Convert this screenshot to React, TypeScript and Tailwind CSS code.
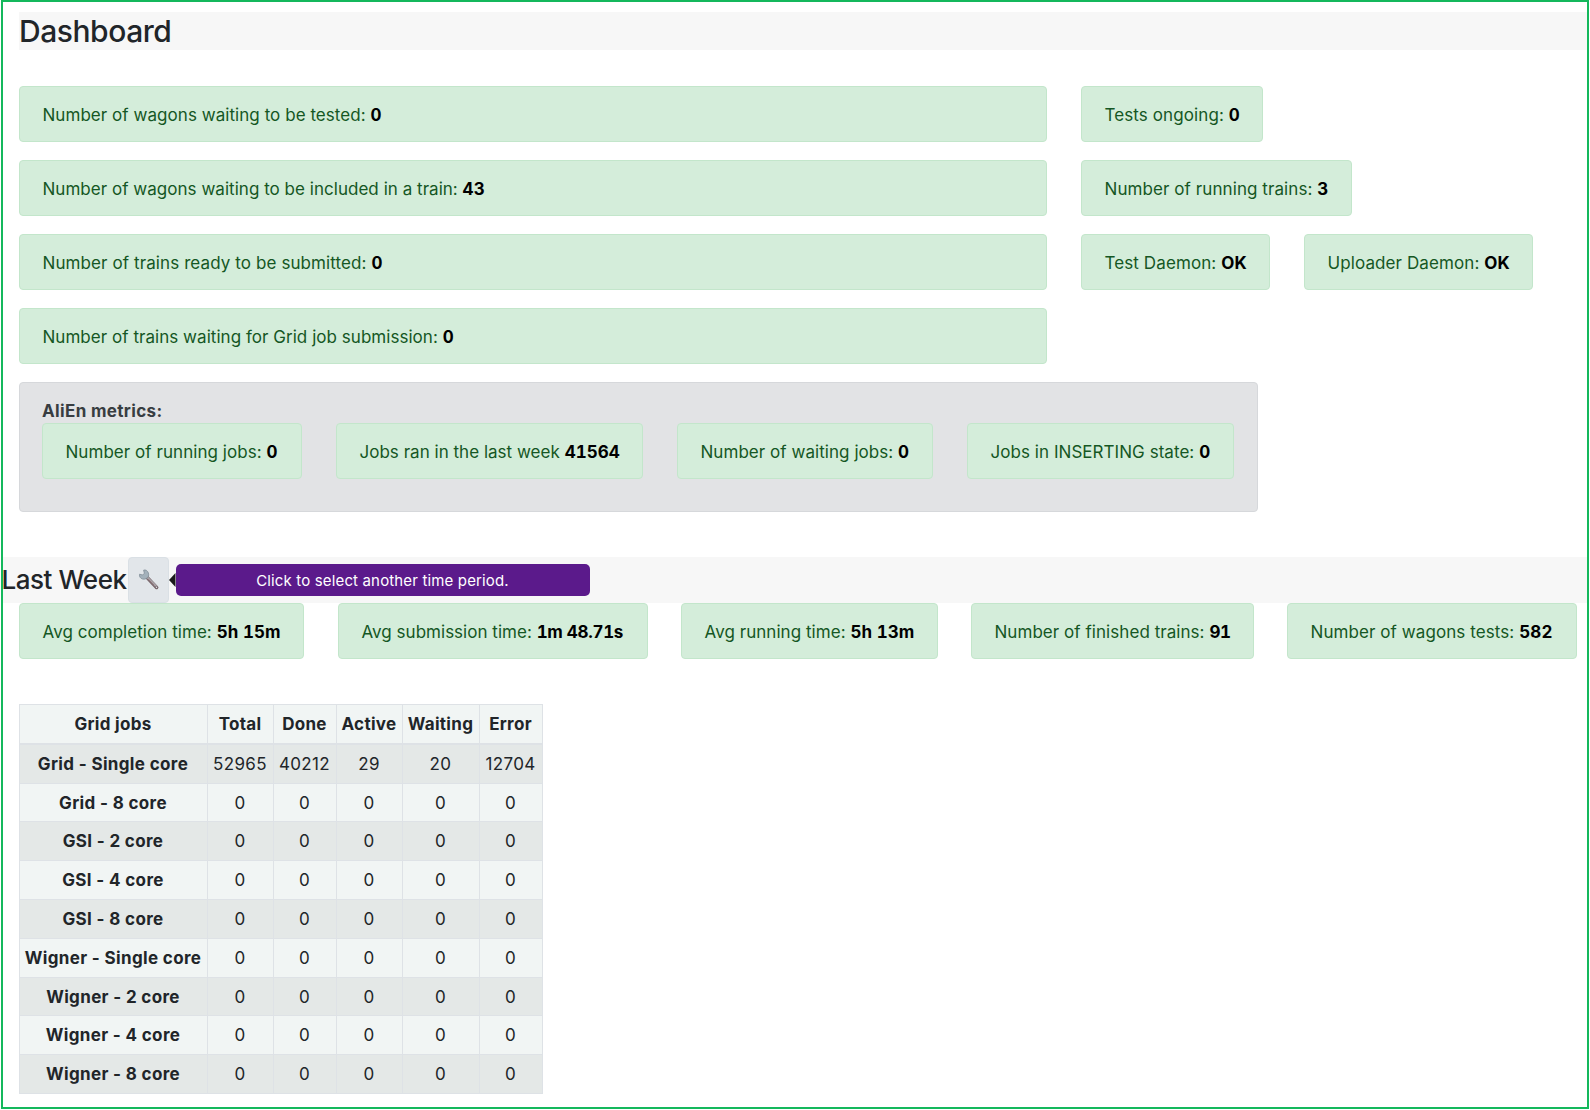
type StatProps = { label: string; value: string; size: string; track?: string; valueTrack?: string };

function Stat({ label, value, size, track = "tracking-[0.05px]", valueTrack = "tracking-[0.15px]" }: StatProps) {
  return (
    <div
      className={`flex h-14 shrink-0 items-center rounded-[4px] border border-[#c3e6cb] bg-[#d4edda] pt-px pl-[22.5px] whitespace-pre text-[#155724] ${size} ${track}`}
    >
      <span>
        {label} <b className={`font-bold text-black tabular-nums ${valueTrack}`}>{value}</b>
      </span>
    </div>
  );
}

function Wrench() {
  return (
    <svg width="22" height="22" viewBox="0 0 22 22" fill="none">
      <path d="M8.2 7.6 18.6 18.4" stroke="#77656a" strokeWidth="3.6" strokeLinecap="round" />
      <path d="M8.4 7.4 18.6 17.8" stroke="#a9a3a8" strokeWidth="2" strokeLinecap="round" />
      <path d="M10.6 10.6 15.8 16" stroke="#8f7478" strokeWidth="1" strokeLinecap="round" />
      <path
        d="M5.6 1.2 6.4 4.2 4.6 6 1.6 5.2C1 7.4 2.4 9.6 4.8 10.1 6 10.3 7.2 10.2 8.2 9.6L10.4 7.6C11.2 5.4 10.4 2.6 8.4 1.4 7.5 .9 6.5 .8 5.6 1.2Z"
        fill="#a3b1bb"
        stroke="#7f8c96"
        strokeWidth="0.8"
        strokeLinejoin="round"
      />
      <circle cx="18.5" cy="18.3" r="1.1" fill="#e8e8ec" stroke="#5c4b50" strokeWidth="0.7" />
    </svg>
  );
}

const heads: [string, string][] = [
  ["Grid jobs", "w-[188px]"],
  ["Total", "w-[66px]"],
  ["Done", "w-[63px]"],
  ["Active", "w-[66px]"],
  ["Waiting", "w-[77px]"],
  ["Error", "w-[63px]"],
];

const zeros = ["0", "0", "0", "0", "0"];

const rows: [string, string[], string][] = [
  ["Grid - Single core", ["52965", "40212", "29", "20", "12704"], "h-[40px]"],
  ["Grid - 8 core", zeros, "h-[38px]"],
  ["GSI - 2 core", zeros, "h-[39px]"],
  ["GSI - 4 core", zeros, "h-[39px]"],
  ["GSI - 8 core", zeros, "h-[39px]"],
  ["Wigner - Single core", zeros, "h-[39px]"],
  ["Wigner - 2 core", zeros, "h-[38px]"],
  ["Wigner - 4 core", zeros, "h-[39px]"],
  ["Wigner - 8 core", zeros, "h-[39px]"],
];

export default function App() {
  return (
    <div className="h-[1110px] w-[1590px] bg-white pl-px font-['Inter',sans-serif] text-[17px] leading-6 text-[#212529]">
      <div className="h-[1109px] w-[1588px] border-2 border-[#14b85c]">
        <h1 className="mt-[10px] ml-4 flex h-[38px] items-center bg-[#f7f7f7] text-[30px] font-medium tracking-[-0.45px]">
          Dashboard
        </h1>
        <div className="mt-9 ml-4 flex gap-[34px]">
          <div className="flex flex-col gap-[18px]">
            <Stat label="Number of wagons waiting to be tested:" value="0" size="w-[1028px]" track="tracking-[0.05px]" />
            <Stat label="Number of wagons waiting to be included in a train:" value="43" size="w-[1028px]" track="tracking-[0.03px]" />
            <Stat label="Number of trains ready to be submitted:" value="0" size="w-[1028px]" track="tracking-[0.1px]" />
            <Stat label="Number of trains waiting for Grid job submission:" value="0" size="w-[1028px]" track="tracking-[0.04px]" />
          </div>
          <div className="flex flex-col gap-[18px]">
            <Stat label="Tests ongoing:" value="0" size="w-[182px]" track="tracking-[0.1px]" />
            <Stat label="Number of running trains:" value="3" size="w-[271px]" track="tracking-[0.08px]" />
            <div className="flex gap-[34px]">
              <Stat label="Test Daemon:" value="OK" size="w-[189px]" track="tracking-[0.1px]" />
              <Stat label="Uploader Daemon:" value="OK" size="w-[229px]" track="tracking-[0.1px]" />
            </div>
          </div>
        </div>
        <div className="mt-[18px] ml-4 h-[130px] w-[1239px] rounded-[4px] border border-[#d6d8db] bg-[#e2e3e5] pt-4 pl-[22px] text-[#383d41]">
          <div className="font-bold tracking-[0.35px]">AliEn metrics:</div>
          <div className="flex">
            <Stat label="Number of running jobs:" value="0" size="w-[260px]" />
            <Stat label="Jobs ran in the last week" value="41564" size="ml-[34px] w-[307px]" track="tracking-[0.02px]" valueTrack="tracking-0" />
            <Stat label="Number of waiting jobs:" value="0" size="ml-[34px] w-[256px]" />
            <Stat label="Jobs in INSERTING state:" value="0" size="ml-[34px] w-[267px]" />
          </div>
        </div>
        <div className="mt-[45px] flex h-[46px] items-center bg-[#f7f7f7]">
          <span className="-mt-px -ml-[1.5px] w-[126.5px] text-[26px] font-medium tracking-[-0.45px] whitespace-nowrap">Last Week</span>
          <div className="flex h-[46px] w-[41px] items-center justify-center rounded-[4px] border border-[#dae0e5] bg-[#e2e6ea]">
            <Wrench />
          </div>
          <svg width="6.5" height="14" viewBox="0 0 7 14" preserveAspectRatio="none">
            <path d="M7 0V14L0 7Z" fill="#1a1a1a" />
          </svg>
          <div className="flex h-[32px] w-[414px] items-center justify-center rounded-[5px] bg-[#5b1a8b] pt-[2px] text-[15px] tracking-[0.15px] text-white">
            Click to select another time period.
          </div>
        </div>
        <div className="ml-4 flex">
          <Stat label="Avg completion time:" value="5h 15m" size="w-[285px]" valueTrack="tracking-0" />
          <Stat label="Avg submission time:" value="1m 48.71s" size="ml-[34px] w-[310px]" valueTrack="tracking-[-0.3px]" track="tracking-[0.02px]" />
          <Stat label="Avg running time:" value="5h 13m" size="ml-[33px] w-[257px]" valueTrack="tracking-0" />
          <Stat label="Number of finished trains:" value="91" size="ml-[33px] w-[283px]" valueTrack="tracking-[-0.3px]" />
          <Stat label="Number of wagons tests:" value="582" size="ml-[33px] w-[290px]" track="tracking-[0.08px]" />
        </div>
        <table className="mt-[45px] ml-[15.5px] w-[523px] table-fixed border-collapse text-center">
          <thead>
            <tr className="h-[39px]">
              {heads.map(([h, w]) => (
                <th key={h} className={`border border-b-2 border-[#dee2e6] bg-[#f1f5f4] p-0 tracking-[0.3px] ${w}`}>
                  {h}
                </th>
              ))}
            </tr>
          </thead>
          <tbody>
            {rows.map(([name, values, h]) => (
              <tr key={name} className={`odd:bg-[#e4e8e7] even:bg-[#f1f5f4] ${h}`}>
                <th className="border border-[#dee2e6] p-0 tracking-[0.35px] whitespace-nowrap">{name}</th>
                {values.map((v, i) => (
                  <td key={i} className="border border-[#dee2e6] p-0 tracking-[0.35px]">
                    {v}
                  </td>
                ))}
              </tr>
            ))}
          </tbody>
        </table>
      </div>
    </div>
  );
}
